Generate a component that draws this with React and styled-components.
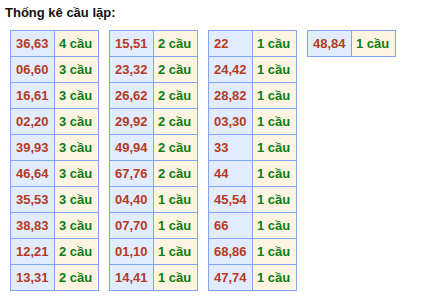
import React from "react";
import styled, { createGlobalStyle } from "styled-components";

const Global = createGlobalStyle`
  html, body { margin: 0; padding: 0; background: #fff; }
  body { font-family: "Liberation Sans", Arial, sans-serif; }
`;

const Page = styled.div`
  padding: 5px 0 0 5px;
`;

const Title = styled.div`
  font-size: 13px;
  line-height: 16px;
  font-weight: bold;
  color: #111;
  margin-bottom: 9px;
`;

const Tables = styled.div`
  display: flex;
  align-items: flex-start;
  gap: 10px;
  padding-left: 5px;
`;

const Table = styled.table`
  border-collapse: collapse;
  table-layout: fixed;
  width: 89px;
  border: 1px solid #82a6f6;
`;

const Cell = styled.td`
  border: 1px solid #82a6f6;
  height: 25px;
  padding: 0;
  font-size: 13px;
  font-weight: bold;
  white-space: nowrap;
  background: ${(p) => (p.$kind === "num" ? "#e1edff" : "#fff3e1")};
  color: ${(p) => (p.$kind === "num" ? "#b53a1e" : "#0b7d12")};
  padding-left: ${(p) => (p.$kind === "num" ? "5px" : "4px")};
`;

const data = [
  [["36,63", 4], ["06,60", 3], ["16,61", 3], ["02,20", 3], ["39,93", 3], ["46,64", 3], ["35,53", 3], ["38,83", 3], ["12,21", 2], ["13,31", 2]],
  [["15,51", 2], ["23,32", 2], ["26,62", 2], ["29,92", 2], ["49,94", 2], ["67,76", 2], ["04,40", 1], ["07,70", 1], ["01,10", 1], ["14,41", 1]],
  [["22", 1], ["24,42", 1], ["28,82", 1], ["03,30", 1], ["33", 1], ["44", 1], ["45,54", 1], ["66", 1], ["68,86", 1], ["47,74", 1]],
  [["48,84", 1]],
];

export default function App() {
  return (
    <Page>
      <Global />
      <Title>Thống kê cầu lặp:</Title>
      <Tables>
        {data.map((rows, i) => (
          <Table key={i}>
            <colgroup>
              <col style={{ width: 44 }} />
              <col style={{ width: 44 }} />
            </colgroup>
            <tbody>
              {rows.map(([n, c]) => (
                <tr key={n}>
                  <Cell $kind="num">{n}</Cell>
                  <Cell $kind="count">{c} cầu</Cell>
                </tr>
              ))}
            </tbody>
          </Table>
        ))}
      </Tables>
    </Page>
  );
}
